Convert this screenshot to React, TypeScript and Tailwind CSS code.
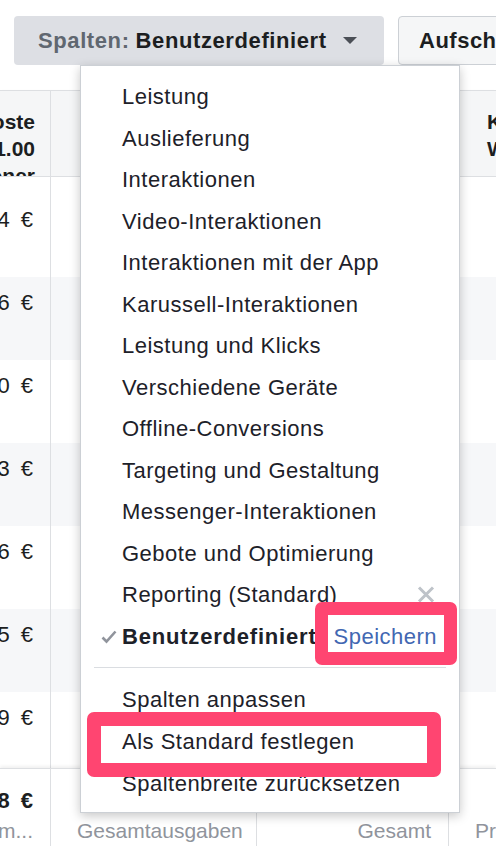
import React from "react";

const menuItems = [
  "Leistung",
  "Auslieferung",
  "Interaktionen",
  "Video-Interaktionen",
  "Interaktionen mit der App",
  "Karussell-Interaktionen",
  "Leistung und Klicks",
  "Verschiedene Geräte",
  "Offline-Conversions",
  "Targeting und Gestaltung",
  "Messenger-Interaktionen",
  "Gebote und Optimierung",
];

const rows = [
  { value: "0,84", shaded: false },
  { value: "0,96", shaded: true },
  { value: "1,10", shaded: false },
  { value: "0,73", shaded: true },
  { value: "0,86", shaded: false },
  { value: "1,05", shaded: true },
  { value: "0,79", shaded: false },
];

const CheckIcon = () => (
  <svg width="16" height="14" viewBox="0 0 16 14" fill="none">
    <path d="M1.5 7.5 L5.5 11.5 L14.5 1.5" stroke="#90949c" strokeWidth="2.6" />
  </svg>
);

const CloseIcon = () => (
  <svg width="18" height="17" viewBox="0 0 18 17" fill="none">
    <path d="M2 1.5 L16 15.5 M16 1.5 L2 15.5" stroke="#bec3c9" strokeWidth="3" />
  </svg>
);

const Euro = ({ value }: { value: string }) => (
  <span className="whitespace-nowrap">
    {value}
    <span className="ml-[11px]">€</span>
  </span>
);

const TableRow = ({ value, shaded, last }: { value: string; shaded: boolean; last?: boolean }) => (
  <div
    className={`grid grid-cols-[51px_206px_192px_1fr] ${last ? "h-[76px]" : "h-[83px]"} ${
      shaded ? "bg-[#f6f7f9]" : "bg-white"
    }`}
  >
    <div className="flex justify-end overflow-hidden border-r border-[#dddfe2] pr-[17px] pt-[14px] text-[22px] leading-[24px] text-[#1c1e21]">
      <Euro value={value} />
    </div>
    <div className="border-r border-[#dddfe2]" />
    <div className="border-r border-[#dddfe2]" />
    <div />
  </div>
);

const App = () => {
  return (
    <div className="relative w-[496px] h-[846px] overflow-hidden bg-white font-['Liberation_Sans',Arial,sans-serif]">
      {/* toolbar */}
      <div className="flex h-[90px] gap-[14px] pl-[14px] pt-[16px]">
        <div className="flex h-[49px] w-[370px] shrink-0 items-center rounded-[4px] bg-[#dddfe4] pl-[24px] text-[22px] font-bold tracking-[0.6px]">
          <span className="text-[#606770]">Spalten:</span>
          <span className="ml-[6px] text-[#1c1e21]">Benutzerdefiniert</span>
          <span className="ml-[16px] h-0 w-0 border-x-[7px] border-t-[7px] border-x-transparent border-t-[#4b4f56]" />
        </div>
        <div className="flex h-[49px] shrink-0 items-center rounded-[4px] border border-[#ccd0d5] bg-[#f5f6f7] pl-[20px] pr-[20px] text-[22px] font-bold tracking-[0.5px] text-[#1c1e21] whitespace-nowrap">
          Aufschlüsselung
        </div>
      </div>

      {/* table */}
      <div className="flex flex-col">
        <div className="grid h-[87px] grid-cols-[51px_206px_192px_1fr] border-y border-[#dddfe2] bg-[#f5f6f7] shadow-[0_2px_3px_rgba(0,0,0,0.08)]">
          <div className="flex flex-col items-end overflow-hidden border-r border-[#dddfe2] pr-[15px] pt-[17px] text-[21px] font-bold leading-[27px] text-[#1c1e21] whitespace-nowrap">
            <span>Koste</span>
            <span>1.00</span>
            <span>Impressioner</span>
          </div>
          <div className="border-r border-[#dddfe2]" />
          <div className="border-r border-[#dddfe2]" />
          <div className="flex flex-col overflow-hidden pl-[38px] pt-[17px] text-[21px] font-bold leading-[27px] text-[#1c1e21] whitespace-nowrap">
            <span>Kosten</span>
            <span>Wert</span>
          </div>
        </div>
        <div className="grid h-[17px] grid-cols-[51px_206px_192px_1fr] bg-white">
          <div className="border-r border-[#dddfe2]" />
          <div className="border-r border-[#dddfe2]" />
          <div className="border-r border-[#dddfe2]" />
        </div>
        {rows.map((row, i) => (
          <TableRow key={i} value={row.value} shaded={row.shaded} last={i === rows.length - 1} />
        ))}
        <div className="grid h-[90px] grid-cols-[51px_206px_192px_1fr] border-t border-[#dddfe2] bg-white shadow-[0_-2px_3px_rgba(0,0,0,0.06)]">
          <div className="flex flex-col items-end overflow-hidden border-r border-[#dddfe2] pr-[17px] pt-[17px] text-[22px] leading-[30px]">
            <span className="font-bold text-[#1c1e21]">
              <Euro value="6,88" />
            </span>
            <span className="text-[21px] text-[#90949c] whitespace-nowrap">Summ...</span>
          </div>
          <div className="border-r border-[#dddfe2] pl-[26px] pt-[47px] text-[21px] leading-[30px] text-[#90949c] whitespace-nowrap">
            Gesamtausgaben
          </div>
          <div className="border-r border-[#dddfe2] pr-[17px] pt-[47px] text-right text-[21px] leading-[30px] text-[#90949c]">
            Gesamt
          </div>
          <div className="overflow-hidden pl-[26px] pt-[47px] text-[21px] leading-[30px] text-[#90949c] whitespace-nowrap">
            Pro Ergebnis
          </div>
        </div>
      </div>

      {/* dropdown menu */}
      <div className="absolute left-[80px] top-[65px] w-[380px] border border-[#ccd0d5] bg-white pb-[8px] pt-[10px] shadow-[0_3px_10px_rgba(0,0,0,0.22)]">
        {menuItems.map((item) => (
          <div
            key={item}
            className="flex h-[41.5px] items-center pl-[41px] text-[22px] tracking-[0.5px] text-[#1d2129] whitespace-nowrap"
          >
            {item}
          </div>
        ))}
        <div className="flex h-[41.5px] items-center justify-between pl-[41px] pr-[24px] text-[22px] tracking-[0.5px] text-[#1d2129]">
          <span>Reporting (Standard)</span>
          <CloseIcon />
        </div>
        <div className="relative flex h-[41.5px] items-center pl-[41px] text-[22px] tracking-[0.5px]">
          <span className="absolute left-[20px] top-[14px]">
            <CheckIcon />
          </span>
          <span className="font-bold tracking-[0.8px] text-[#1d2129]">Benutzerdefiniert</span>
          <span className="ml-[17px] text-[#4267b2]">Speichern</span>
        </div>
        <div className="mx-[13px] my-[10px] h-px bg-[#dadde1]" />
        <div className="flex h-[42px] items-center pl-[41px] text-[22px] tracking-[0.5px] text-[#1d2129]">
          Spalten anpassen
        </div>
        <div className="flex h-[42px] items-center pl-[41px] text-[22px] tracking-[0.5px] text-[#1d2129]">
          Als Standard festlegen
        </div>
        <div className="flex h-[42px] items-center pl-[41px] text-[22px] tracking-[0.5px] text-[#1d2129]">
          Spaltenbreite zurücksetzen
        </div>
      </div>

      {/* annotation highlights */}
      <div className="absolute left-[315px] top-[602px] h-[63px] w-[142px] rounded-[7px] border-[13px] border-[#ff4571]" />
      <div className="absolute left-[87px] top-[712px] h-[65px] w-[354px] rounded-[7px] border-[14px] border-[#ff4571]" />
    </div>
  );
};

export default App;
